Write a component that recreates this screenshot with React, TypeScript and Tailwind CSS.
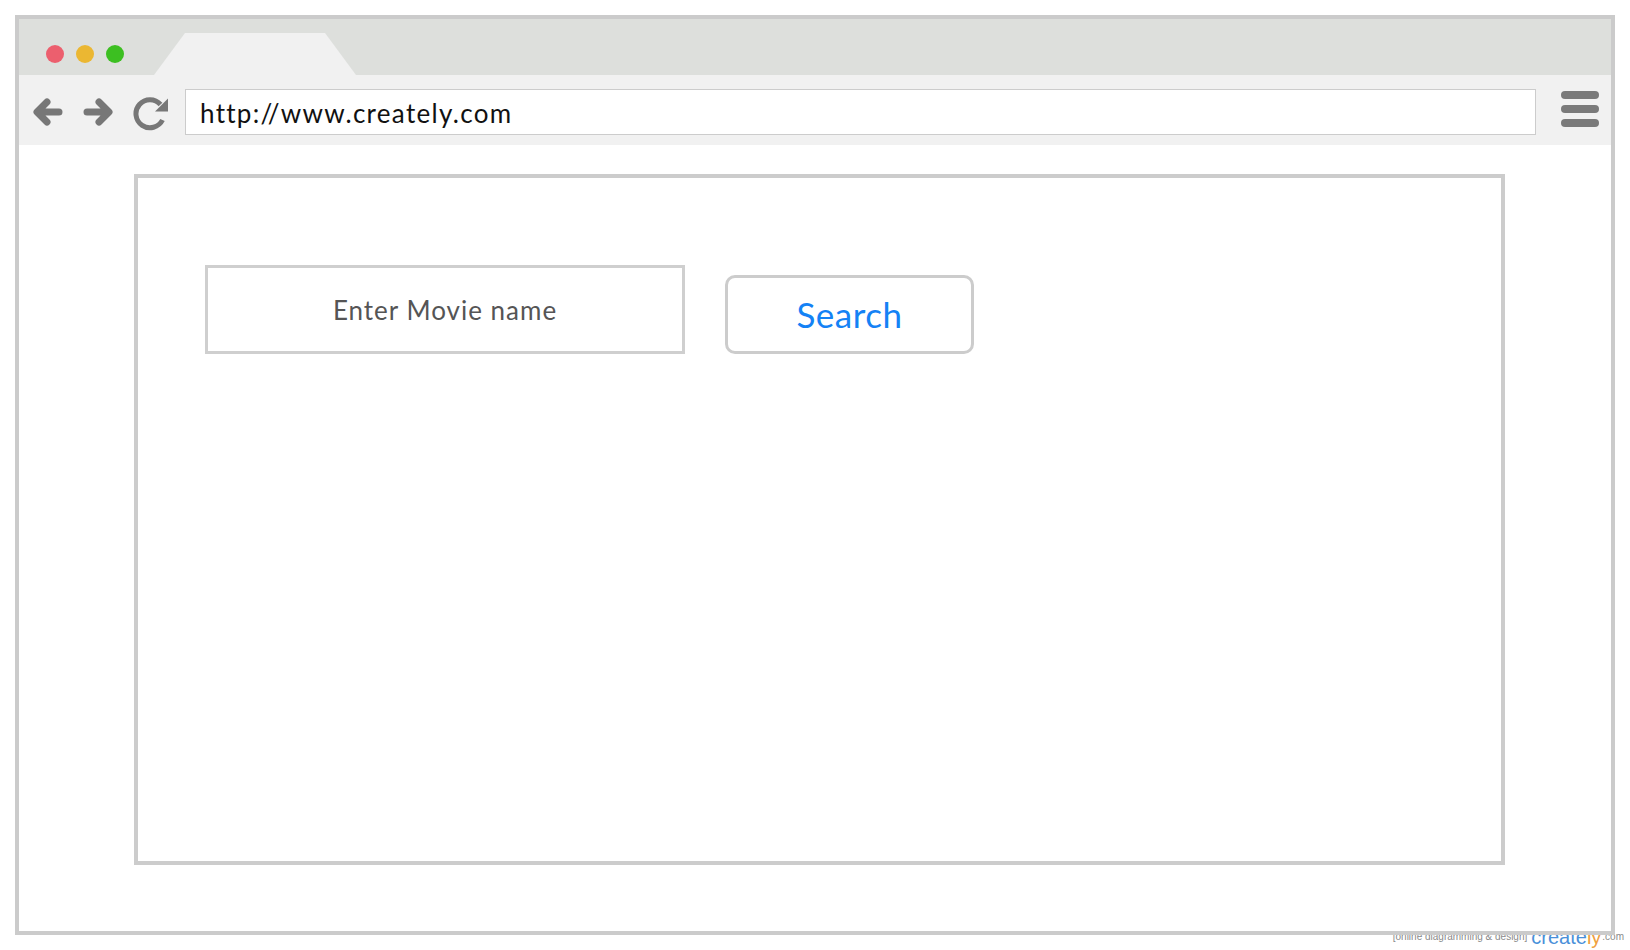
import React from "react";

const font = { fontFamily: "Lato, 'Open Sans', sans-serif" };

function BackArrow() {
  return (
    <svg width="30" height="28" viewBox="0 0 30 28">
      <path d="M26 14 H5 M14 4 L4 14 L14 24" fill="none" stroke="#777777" strokeWidth="7" strokeLinecap="round" strokeLinejoin="round" />
    </svg>
  );
}

function ForwardArrow() {
  return (
    <svg width="30" height="28" viewBox="0 0 30 28">
      <path d="M4 14 H25 M16 4 L26 14 L16 24" fill="none" stroke="#777777" strokeWidth="7" strokeLinecap="round" strokeLinejoin="round" />
    </svg>
  );
}

function Reload() {
  return (
    <svg width="36" height="36" viewBox="0 0 36 36">
      <path d="M29.5 24 A14 14 0 1 1 27.5 8.5" fill="none" stroke="#777777" strokeWidth="5" strokeLinecap="butt" />
      <path d="M35 2.5 L35 15.5 L22 15.5 Z" fill="#777777" />
    </svg>
  );
}

export default function App() {
  return (
    <div className="relative w-full h-[950px] bg-white overflow-hidden" style={font}>
      <div className="relative z-10 ml-[15px] mt-[15px] w-[1600px] h-[920px] border-4 border-[#cbcbcb] bg-white flex flex-col">
        {/* tab bar */}
        <div className="h-[56px] bg-[#dddfdc] flex items-start shrink-0">
          <div className="flex gap-[12px] ml-[27px] mt-[26px]">
            <div className="w-[18px] h-[18px] rounded-full bg-[#ec5f6e]" />
            <div className="w-[18px] h-[18px] rounded-full bg-[#ebb732]" />
            <div className="w-[18px] h-[18px] rounded-full bg-[#3cbf21]" />
          </div>
          <svg className="self-end ml-[30px]" width="202" height="42" viewBox="0 0 202 42">
            <path d="M0 42 L31 0 L171 0 L202 42 Z" fill="#f1f1f1" />
          </svg>
        </div>
        {/* toolbar */}
        <div className="h-[70px] bg-[#f1f1f1] flex items-start shrink-0">
          <div className="ml-[14px] mt-[23px]"><BackArrow /></div>
          <div className="ml-[20px] mt-[23px]"><ForwardArrow /></div>
          <div className="ml-[20px] mt-[21px]"><Reload /></div>
          <div className="ml-[16px] mt-[14px] w-[1351px] h-[46px] bg-white border border-[#cccccc] flex items-center pl-[14px]">
            <span className="text-[26px] leading-none tracking-[1.3px] text-[#111111] mt-[1px]">http://www.creately.com</span>
          </div>
          <div className="ml-[25px] mt-[16px] flex flex-col gap-[6px]">
            <div className="w-[38px] h-[8px] rounded-full bg-[#7a7a7a]" />
            <div className="w-[38px] h-[8px] rounded-full bg-[#7a7a7a]" />
            <div className="w-[38px] h-[8px] rounded-full bg-[#7a7a7a]" />
          </div>
        </div>
        {/* content */}
        <div className="flex-1 bg-white">
          <div className="ml-[115px] mt-[29px] w-[1371px] h-[691px] border-4 border-[#cccccc] flex items-start">
            <div className="ml-[67px] mt-[87px] w-[480px] h-[89px] border-[3px] border-[#cfcfcf] flex items-center justify-center">
              <span className="text-[26px] leading-none tracking-[1px] text-[#555555]">Enter Movie name</span>
            </div>
            <div className="ml-[40px] mt-[97px] w-[249px] h-[79px] border-[3px] border-[#cccccc] rounded-[10px] flex items-center justify-center">
              <span className="text-[35px] leading-none tracking-[0.5px] text-[#1482f5]">Search</span>
            </div>
          </div>
        </div>
      </div>
      {/* watermark */}
      <div className="absolute z-0 right-[6px] top-[927px] flex items-end gap-[4px] whitespace-nowrap" style={{ fontFamily: "'Liberation Sans', sans-serif" }}>
        <span className="text-[10px] leading-none text-[#8a8a8a] mb-[5px]">[online diagramming &amp; design]</span>
        <span className="text-[20px] leading-none text-[#4a90d9]">
          create<span className="text-[#f0a040]">ly</span>
        </span>
        <span className="text-[10px] leading-none text-[#8a8a8a] mb-[5px] -ml-[3px]">.com</span>
      </div>
    </div>
  );
}
